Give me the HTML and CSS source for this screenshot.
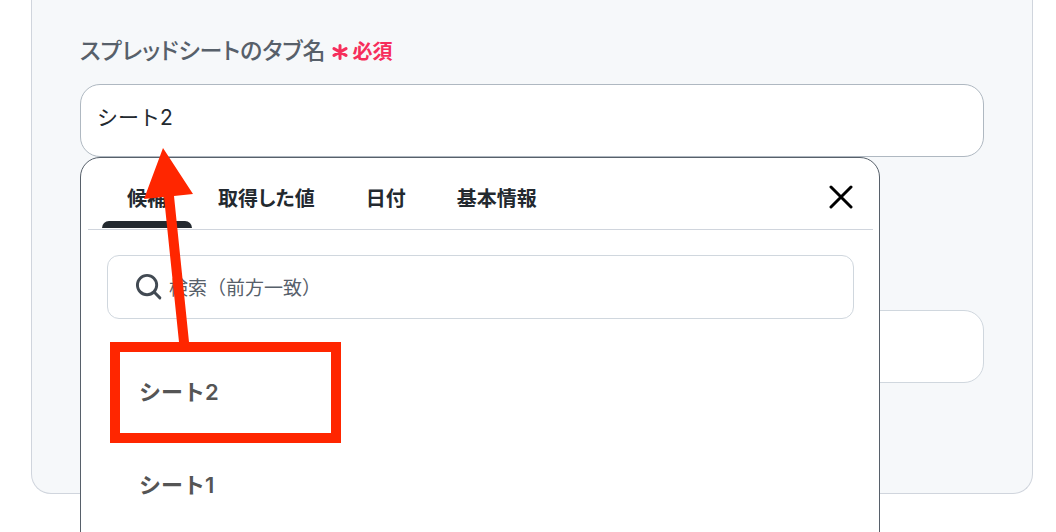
FILE: index.html
```html
<!DOCTYPE html>
<html lang="ja">
<head>
<meta charset="utf-8">
<meta name="viewport" content="width=device-width, initial-scale=1">
<title>スプレッドシートのタブ名</title>
<link rel="stylesheet" href="styles.css">
</head>
<body>
<main class="page">
  <form class="card">
    <div class="field">
      <div class="field-head">
        <label class="field-label" for="tab-name">スプレッドシートのタブ名</label>
        <span class="required">
          <svg class="required-icon" viewBox="0 0 16 16" aria-hidden="true"><path d="M8 1.6v12.8M2 4.6l12 6.8M14 4.6L2 11.4"/></svg>
          必須
        </span>
      </div>
      <div class="combo">
        <input class="text-input text-input-active" id="tab-name" type="text" value="シート2">
        <section class="popup" aria-label="候補の選択">
          <div class="popup-head">
            <div class="tabs" role="tablist">
              <button class="tab tab-selected" type="button" role="tab" aria-selected="true">候補</button>
              <button class="tab" type="button" role="tab" aria-selected="false">取得した値</button>
              <button class="tab" type="button" role="tab" aria-selected="false">日付</button>
              <button class="tab" type="button" role="tab" aria-selected="false">基本情報</button>
            </div>
            <button class="close" type="button" aria-label="閉じる">
              <svg class="close-icon" viewBox="0 0 24 24" aria-hidden="true"><path d="M2 2l20 20M22 2L2 22"/></svg>
            </button>
          </div>
          <label class="search">
            <svg class="search-icon" viewBox="0 0 28 28" aria-hidden="true"><circle cx="12.5" cy="12.5" r="10"/><path d="M19.8 19.8l6 6"/></svg>
            <input class="search-input" type="search" placeholder="検索（前方一致）" aria-label="検索">
          </label>
          <ul class="options">
            <li><button class="option" type="button">シート2</button></li>
            <li><button class="option" type="button">シート1</button></li>
          </ul>
          <svg class="callout" viewBox="0 0 240 300" aria-hidden="true">
            <path d="M83 0L113 46L94 48L109 194H99L84 49L64 51Z"/>
            <path class="callout-frame" d="M35 199h221v91H35z"/>
          </svg>
        </section>
      </div>
    </div>
    <div class="field">
      <input class="text-input" type="text" aria-label="値">
    </div>
  </form>
</main>
</body>
</html>
```
FILE: styles.css
```css
* {
  box-sizing: border-box;
}

body {
  margin: 0;
  min-height: 100vh;
  overflow: hidden;
  background: #fff;
  color: #23292f;
  font-family: Inter, "Noto Sans CJK JP", sans-serif;
}

button,
input {
  font-family: inherit;
}

.page {
  padding: 0 23px 38px 31px;
}

.card {
  display: flex;
  flex-direction: column;
  gap: 153px;
  padding: 33px 48px 110px;
  border: 1px solid #d0d5dd;
  border-top: 0;
  border-radius: 0 0 20px 20px;
  background: #f6f8fa;
}

.field-head {
  display: flex;
  align-items: center;
  gap: 6px;
  height: 32px;
  margin-bottom: 19px;
  font-feature-settings: "palt";
}

.field-label {
  color: #57606a;
  font-size: 23px;
  font-weight: 500;
}

.required {
  display: flex;
  align-items: center;
  gap: 5px;
  padding-top: 2px;
  color: #f62e5b;
  font-size: 20px;
  font-weight: 700;
}

.required-icon {
  width: 16px;
  height: 16px;
  margin-top: 4px;
  fill: none;
  stroke: currentColor;
  stroke-width: 3;
  stroke-linecap: round;
}

.combo {
  position: relative;
}

.text-input {
  display: block;
  width: 100%;
  height: 73px;
  padding: 0 16px 10px;
  border: 1px solid #d0d7de;
  border-radius: 20px;
  background: #fff;
  color: #23292f;
  font-size: 21px;
}

.text-input-active {
  border-color: #afb8c1;
}

.popup {
  position: absolute;
  top: 100%;
  left: 0;
  width: 800px;
  max-width: 100%;
  padding: 0 6px 24px 7px;
  border: 1px solid #57606a;
  border-radius: 20px;
  background: #fff;
}

.popup-head {
  display: flex;
  align-items: center;
  justify-content: space-between;
  height: 72px;
  padding: 0 16px 0 14px;
  border-bottom: 1px solid #d0d5dd;
}

.tabs {
  display: flex;
  align-self: stretch;
  gap: 1px;
}

.tab {
  position: relative;
  padding: 8px 25px 0;
  border: 0;
  background: none;
  color: #23292f;
  font-size: 20px;
  font-weight: 700;
  font-feature-settings: "palt";
}

.tab-selected::after {
  content: "";
  position: absolute;
  right: 0;
  bottom: 1px;
  left: 0;
  height: 7px;
  border-radius: 7px 7px 0 0;
  background: #23292f;
}

.close {
  display: flex;
  padding: 10px 4px 4px;
  border: 0;
  background: none;
  color: #000;
}

.close-icon {
  width: 24px;
  height: 24px;
  fill: none;
  stroke: currentColor;
  stroke-width: 3;
  stroke-linecap: round;
}

.search {
  display: flex;
  align-items: center;
  gap: 7px;
  height: 64px;
  margin: 25px 19px 0;
  padding: 0 27px;
  border: 1px solid #d0d7de;
  border-radius: 12px;
}

.search-icon {
  flex: none;
  width: 27px;
  height: 27px;
  margin-bottom: 2px;
  fill: none;
  stroke: #424a53;
  stroke-width: 3;
  stroke-linecap: round;
}

.search-input {
  flex: 1;
  min-width: 0;
  padding: 2px 0 0;
  border: 0;
  outline: 0;
  background: none;
  font-size: 19px;
}

.search-input::placeholder {
  color: #57606a;
}

.options {
  margin: 27px 19px 0;
  padding: 0;
  list-style: none;
}

.option {
  display: block;
  width: 100%;
  height: 93px;
  padding: 0 32px 6px;
  border: 0;
  background: none;
  color: #555;
  font-size: 22px;
  font-weight: 600;
  text-align: left;
}

.callout {
  position: absolute;
  top: -10px;
  left: -1px;
  width: 240px;
  height: 300px;
  overflow: visible;
  fill: #ff2600;
  pointer-events: none;
}

.callout-frame {
  fill: none;
  stroke: #ff2600;
  stroke-width: 10;
}
```
